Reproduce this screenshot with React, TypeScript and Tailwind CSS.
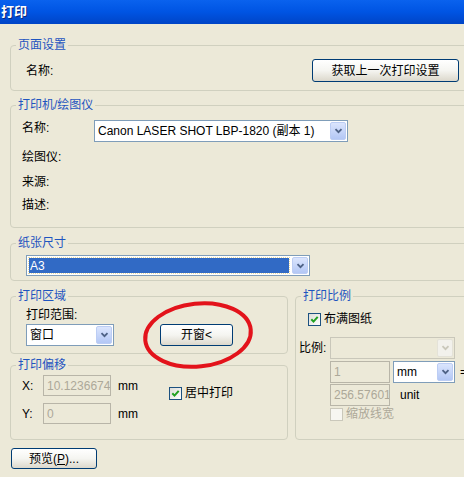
import type { ReactNode } from "react";

function Chevron({ color = "#4d6185" }: { color?: string }) {
  return (
    <svg width="9" height="6" viewBox="0 0 9 6">
      <path d="M1.5 1.2l3 3 3-3" stroke={color} strokeWidth="1.8" fill="none" />
    </svg>
  );
}

function XPButton({ children, className = "" }: { children: ReactNode; className?: string }) {
  return (
    <button
      className={`flex items-center justify-center shrink-0 border border-[#003c74] rounded-[3px] bg-gradient-to-b from-white via-[#f5f5f1] to-[#dcd8cc] text-black ${className}`}
    >
      {children}
    </button>
  );
}

function Combo({
  value,
  className = "",
  selected,
  disabled,
}: {
  value: string;
  className?: string;
  selected?: boolean;
  disabled?: boolean;
}) {
  return (
    <div
      className={`flex items-stretch shrink-0 border ${
        disabled ? "border-[#c9c7ba] bg-[#ece9d8]" : "border-[#7f9db9] bg-white"
      } ${className}`}
    >
      <div className="flex-1 flex min-w-0 p-[2px]">
        <span
          className={`flex-1 flex items-center pl-[1px] whitespace-nowrap overflow-hidden ${
            selected ? "bg-[#316ac5] text-white outline-1 outline-dotted outline-[#e8d9a0]" : ""
          }`}
        >
          {value}
        </span>
      </div>
      <div
        className={`m-[1px] w-[16px] shrink-0 flex items-center justify-center rounded-[2px] border ${
          disabled
            ? "border-[#e4e2d8] bg-[#f2f1ec]"
            : "border-[#bccdf4] bg-gradient-to-b from-[#dbe5fd] to-[#b3c7f5]"
        }`}
      >
        <Chevron color={disabled ? "#c9c7ba" : "#4d6185"} />
      </div>
    </div>
  );
}

function TextBox({ value, className = "" }: { value: string; className?: string }) {
  return (
    <div
      className={`flex items-center shrink-0 border border-[#b8b5a8] bg-[#ece9d8] text-[#aca899] pl-[3px] whitespace-nowrap overflow-hidden ${className}`}
    >
      {value}
    </div>
  );
}

function CheckBox({ checked, disabled }: { checked?: boolean; disabled?: boolean }) {
  return (
    <span
      className={`w-[13px] h-[13px] shrink-0 flex items-center justify-center border ${
        disabled
          ? "border-[#cac8bb] bg-[#f7f6f1]"
          : "border-[#1c5180] bg-gradient-to-br from-[#dcdcd7] to-white"
      }`}
    >
      {checked && (
        <svg width="9" height="9" viewBox="0 0 9 9">
          <path d="M1.3 4.3l2.2 2.3 4.2-4.8" stroke="#21a121" strokeWidth="2" fill="none" />
        </svg>
      )}
    </span>
  );
}

function Group({
  title,
  className = "",
  children,
}: {
  title: string;
  className?: string;
  children?: ReactNode;
}) {
  return (
    <div className={`relative border border-[#d0d0bf] rounded-[4px] ${className}`}>
      <span className="absolute -top-[8px] left-[5px] px-[2px] bg-[#ece9d8] text-[#1f55c0] leading-[14px] whitespace-nowrap">
        {title}
      </span>
      {children}
    </div>
  );
}

export default function App() {
  return (
    <div className="w-[464px] h-[477px] overflow-hidden bg-[#ece9d8] text-[12px] text-black font-['Liberation_Sans','Noto_Sans_CJK_SC',sans-serif]">
      {/* title bar */}
      <div className="h-[24px] flex items-center pl-[1px] bg-gradient-to-b from-[#0a62ee] via-[#0054e3] to-[#0044c6] text-white font-bold text-[13px] [text-shadow:1px_1px_0_#0a2a80]">
        打印
      </div>

      <div className="pl-[10px]">
        <Group title="页面设置" className="mt-[21px] w-[470px] h-[46px]">
          <div className="flex items-center pt-[13px]">
            <span className="pl-[15px] w-[301px] shrink-0">名称:</span>
            <XPButton className="w-[147px] h-[23px]">获取上一次打印设置</XPButton>
          </div>
        </Group>

        <Group title="打印机/绘图仪" className="mt-[14px] w-[470px] h-[123px]">
          <div className="pt-[14px] pl-[11px] leading-[16px]">
            <div className="flex">
              <span className="w-[72px] shrink-0">名称:</span>
              <Combo className="w-[254px] h-[22px]" value="Canon LASER SHOT LBP-1820 (副本 1)" />
            </div>
            <div className="mt-[7px]">绘图仪:</div>
            <div className="mt-[9px]">来源:</div>
            <div className="mt-[7px]">描述:</div>
          </div>
        </Group>

        <Group title="纸张尺寸" className="mt-[15px] w-[470px] h-[38px]">
          <div className="pt-[11px] pl-[15px]">
            <Combo className="w-[284px] h-[21px]" value="A3" selected />
          </div>
        </Group>

        <div className="flex items-start mt-[15px]">
          <div className="w-[278px] shrink-0 flex flex-col">
            <Group title="打印区域" className="h-[58px]">
              <div className="pt-[10px] pl-[15px]">
                <div className="leading-[16px]">打印范围:</div>
                <div className="flex items-center mt-[1px]">
                  <Combo className="w-[88px] h-[22px]" value="窗口" />
                  <XPButton className="ml-[46px] w-[73px] h-[22px]">开窗&lt;</XPButton>
                </div>
              </div>
              <svg
                className="absolute left-[130px] top-[3px] z-10 overflow-visible"
                width="116"
                height="72"
                viewBox="0 0 116 72"
              >
                <ellipse
                  cx="57"
                  cy="35"
                  rx="53"
                  ry="31.5"
                  transform="rotate(-6 57 35)"
                  stroke="#e3131b"
                  strokeWidth="4"
                  fill="none"
                />
              </svg>
            </Group>

            <Group title="打印偏移" className="mt-[11px] h-[75px]">
              <div className="flex pt-[9px] pl-[11px]">
                <div className="w-[147px] shrink-0 flex flex-col gap-[7px]">
                  <div className="flex items-center">
                    <span className="w-[21px] shrink-0">X:</span>
                    <TextBox className="w-[68px] h-[21px]" value="10.1236674" />
                    <span className="ml-[7px]">mm</span>
                  </div>
                  <div className="flex items-center">
                    <span className="w-[21px] shrink-0">Y:</span>
                    <TextBox className="w-[68px] h-[21px]" value="0" />
                    <span className="ml-[7px]">mm</span>
                  </div>
                </div>
                <div className="flex items-center mt-[12px] self-start">
                  <CheckBox checked />
                  <span className="ml-[3px] leading-[13px]">居中打印</span>
                </div>
              </div>
            </Group>
          </div>

          <Group title="打印比例" className="ml-[7px] w-[180px] h-[144px] shrink-0">
            <div className="pt-[16px]">
              <div className="flex items-center pl-[12px]">
                <CheckBox checked />
                <span className="ml-[3px] leading-[13px]">布满图纸</span>
              </div>
              <div className="flex items-center mt-[11px] pl-[3px]">
                <span className="w-[31px] shrink-0">比例:</span>
                <Combo disabled className="w-[125px] h-[22px]" value="" />
              </div>
              <div className="flex items-center mt-[2px] pl-[34px]">
                <TextBox className="w-[60px] h-[22px]" value="1" />
                <Combo className="ml-[3px] w-[62px] h-[22px]" value="mm" />
                <span className="ml-[5px]">=</span>
              </div>
              <div className="flex items-center mt-[1px] pl-[34px]">
                <TextBox className="w-[60px] h-[22px]" value="256.576012" />
                <span className="ml-[10px]">unit</span>
              </div>
              <div className="flex items-center mt-[2px] pl-[34px]">
                <CheckBox disabled />
                <span className="ml-[3px] leading-[13px] text-[#aca899]">缩放线宽</span>
              </div>
            </div>
          </Group>
        </div>

        <XPButton className="mt-[8px] ml-[1px] w-[86px] h-[21px]">
          预览(<span className="underline">P</span>)...
        </XPButton>
      </div>
    </div>
  );
}
